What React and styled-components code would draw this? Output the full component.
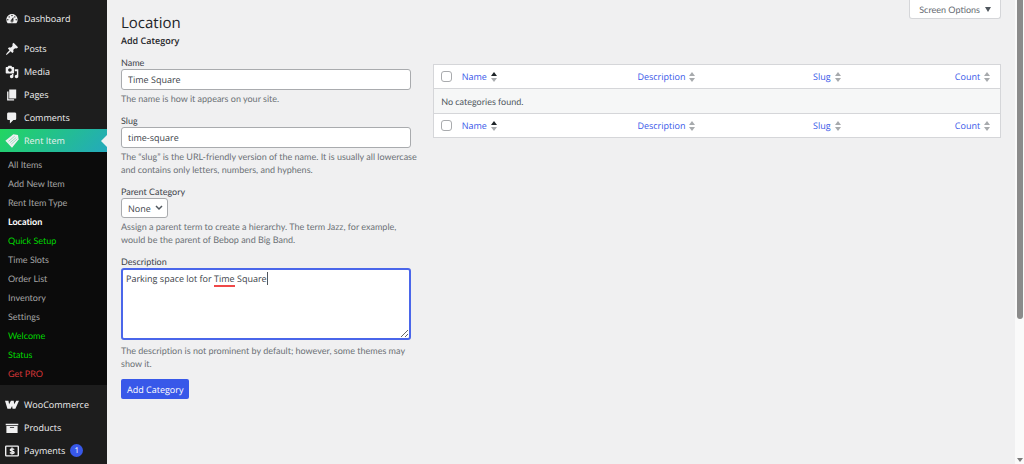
import { useState } from "react";
import styled, { createGlobalStyle } from "styled-components";

const menu = [
  { label: "Dashboard", icon: "dashboard", gap: true },
  { label: "Posts", icon: "posts" },
  { label: "Media", icon: "media" },
  { label: "Pages", icon: "pages" },
  { label: "Comments", icon: "comments" },
];

const submenu = [
  { label: "All Items" },
  { label: "Add New Item" },
  { label: "Rent Item Type" },
  { label: "Location", color: "#fff", current: true },
  { label: "Quick Setup", color: "#00d800" },
  { label: "Time Slots" },
  { label: "Order List" },
  { label: "Inventory" },
  { label: "Settings" },
  { label: "Welcome", color: "#00d800" },
  { label: "Status", color: "#00d800" },
  { label: "Get PRO", color: "#d63638" },
];

const shopMenu = [
  { label: "WooCommerce", icon: "woo" },
  { label: "Products", icon: "products" },
  { label: "Payments", icon: "payments", count: 1 },
];

const columns = ["Name", "Description", "Slug", "Count"];

const icons = {
  dashboard: (
    <path d="M3.76 16h12.48c1.1-1.37 1.76-3.11 1.76-5 0-4.42-3.58-8-8-8s-8 3.58-8 8c0 1.89.66 3.63 1.76 5zM10 4c.55 0 1 .45 1 1s-.45 1-1 1-1-.45-1-1 .45-1 1-1zM6 6c.55 0 1 .45 1 1s-.45 1-1 1-1-.45-1-1 .45-1 1-1zm8 0c.55 0 1 .45 1 1s-.45 1-1 1-1-.45-1-1 .45-1 1-1zm-5.37 5.55L12 7v6c0 1.1-.9 2-2 2s-2-.9-2-2c0-.57.24-1.08.63-1.45zM4 10c.55 0 1 .45 1 1s-.45 1-1 1-1-.45-1-1 .45-1 1-1zm12 0c.55 0 1 .45 1 1s-.45 1-1 1-1-.45-1-1 .45-1 1-1zm-5 3c0-.55-.45-1-1-1s-1 .45-1 1 .45 1 1 1 1-.45 1-1z" />
  ),
  posts: (
    <path d="M10.44 3.02l1.82-1.82 6.36 6.35-1.83 1.82c-1.05-.68-2.48-.57-3.41.36l-.75.75c-.92.93-1.04 2.35-.35 3.41l-1.83 1.82-2.41-2.41-2.8 2.79c-.42.42-3.38 2.71-3.8 2.29s1.86-3.39 2.28-3.81l2.79-2.79L4.1 9.36l1.83-1.82c1.05.69 2.48.57 3.4-.36l.75-.75c.93-.92 1.05-2.35.36-3.41z" />
  ),
  media: (
    <path d="M13 11V4c0-.55-.45-1-1-1h-1.67L9 1H5L3.67 3H2c-.55 0-1 .45-1 1v7c0 .55.45 1 1 1h10c.55 0 1-.45 1-1zM7 4.5c1.38 0 2.5 1.12 2.5 2.5S8.38 9.5 7 9.5 4.5 8.38 4.5 7 5.62 4.5 7 4.5zM14 6h5v10.5c0 1.38-1.12 2.5-2.5 2.5S14 17.88 14 16.5s1.12-2.5 2.5-2.5c.17 0 .34.02.5.05V9h-3V6zm-4 8.05V13h2v3.5c0 1.38-1.12 2.5-2.5 2.5S7 17.88 7 16.5 8.12 14 9.5 14c.17 0 .34.02.5.05z" />
  ),
  pages: <path d="M6 15V2h10v13H6zm-1 1h8v2H3V5h2v11z" />,
  comments: (
    <path d="M5 2h9c1.1 0 2 .9 2 2v7c0 1.1-.9 2-2 2h-2l-5 5v-5H5c-1.1 0-2-.9-2-2V4c0-1.1.9-2 2-2z" />
  ),
  rent: (
    <>
      <path d="M.5 9.500 12 .5l6.500 1 1 6.500L10 19.500z" />
      <path
        d="M5 10.500l9-7.500M7 12.500l9-7.500M9 14.500l8.500-7.500"
        stroke="#25c57c"
        strokeWidth=".6"
      />
    </>
  ),
  woo: (
    <path d="M0 4h5l.8 5L8.500 4h4l.6 5L16 4h4l-5.200 11.500h-4l-.7-4-2 4H3.500z" />
  ),
  products: <path d="M19 4v2H1V4h18zM2 7h16v10H2V7zm11 3V9H7v1h6z" />,
  payments: (
    <g fill="none" stroke="currentColor" strokeWidth="2">
      <rect x="1" y="3" width="18" height="14" rx="1" />
      <path d="M13 8C12 6.500 7.500 6.500 7.500 8.500S13 10 13 12 8.500 13.500 7 12M10 5v10" />
    </g>
  ),
};

const MenuIcon = ({ name }) => (
  <Icon viewBox="0 0 20 20" aria-hidden="true">
    {icons[name]}
  </Icon>
);

const MenuEntry = ({ item }) => (
  <MenuItem $gap={item.gap}>
    <MenuLink href="#">
      <MenuIcon name={item.icon} />
      {item.label}
      {item.count && <Count>{item.count}</Count>}
    </MenuLink>
  </MenuItem>
);

const ColumnRow = ({ id }) => (
  <tr>
    <CheckCell scope="col">
      <Checkbox type="checkbox" id={id} aria-label="Select All" />
    </CheckCell>
    {columns.map((column) => (
      <HeadCell key={column} scope="col">
        <SortLink href="#">
          {column}
          <Sorter viewBox="0 0 6 10" aria-hidden="true">
            <path d="M3 0 6 4H0z" fill={column === "Name" ? "#1d2327" : "#a7aaad"} />
            <path d="M3 10 0 6h6z" fill="#a7aaad" />
          </Sorter>
        </SortLink>
      </HeadCell>
    ))}
  </tr>
);

const App = () => {
  const [name, setName] = useState("Time Square");
  const [slug, setSlug] = useState("time-square");
  const [description, setDescription] = useState(
    "Parking space lot for Time Square"
  );

  return (
    <>
      <GlobalStyle />
      <Page>
        <Sidebar>
          <MenuList>
            {menu.map((item) => (
              <MenuEntry key={item.label} item={item} />
            ))}
            <MenuItem>
              <MenuLink href="#" $active>
                <MenuIcon name="rent" />
                Rent Item
              </MenuLink>
              <Submenu>
                {submenu.map((item) => (
                  <li key={item.label}>
                    <SubLink href="#" $color={item.color} $current={item.current}>
                      {item.label}
                    </SubLink>
                  </li>
                ))}
              </Submenu>
            </MenuItem>
            {shopMenu.map((item) => (
              <MenuEntry key={item.label} item={item} />
            ))}
          </MenuList>
        </Sidebar>

        <Main>
          <TopBar>
            <Title>Location</Title>
            <ScreenOptions type="button">
              Screen Options
              <Triangle />
            </ScreenOptions>
          </TopBar>
          <Columns>
            <form onSubmit={(e) => e.preventDefault()}>
              <Subtitle>Add Category</Subtitle>
              <Field>
                <Label htmlFor="name">Name</Label>
                <Input
                  id="name"
                  type="text"
                  value={name}
                  onChange={(e) => setName(e.target.value)}
                />
                <Help>The name is how it appears on your site.</Help>
              </Field>
              <Field>
                <Label htmlFor="slug">Slug</Label>
                <Input
                  id="slug"
                  type="text"
                  value={slug}
                  onChange={(e) => setSlug(e.target.value)}
                />
                <Help>
                  The “slug” is the URL-friendly version of the name. It is
                  usually all lowercase and contains only letters, numbers, and
                  hyphens.
                </Help>
              </Field>
              <Field>
                <Label htmlFor="parent">Parent Category</Label>
                <SelectBox>
                  <Select id="parent">
                    <option>None</option>
                  </Select>
                  <Chevron viewBox="0 0 10 10" aria-hidden="true">
                    <path d="M2 3l3 3 3-3" />
                  </Chevron>
                </SelectBox>
                <Help>
                  Assign a parent term to create a hierarchy. The term Jazz, for
                  example, would be the parent of Bebop and Big Band.
                </Help>
              </Field>
              <Field>
                <Label htmlFor="description">Description</Label>
                <Editor>
                  <TextArea
                    id="description"
                    spellCheck="false"
                    value={description}
                    onChange={(e) => setDescription(e.target.value)}
                  />
                  <SpellLayer aria-hidden="true">
                    {description.split(/(Time)/).map((part, i) =>
                      part === "Time" ? (
                        <Misspelled key={i}>{part}</Misspelled>
                      ) : (
                        part
                      )
                    )}
                    <Caret />
                  </SpellLayer>
                </Editor>
                <Help>
                  The description is not prominent by default; however, some
                  themes may show it.
                </Help>
              </Field>
              <SubmitButton type="submit">Add Category</SubmitButton>
            </form>

            <Table>
              <thead>
                <ColumnRow id="select-all-top" />
              </thead>
              <tbody>
                <tr>
                  <EmptyCell colSpan={5}>No categories found.</EmptyCell>
                </tr>
              </tbody>
              <tfoot>
                <ColumnRow id="select-all-bottom" />
              </tfoot>
            </Table>
          </Columns>
        </Main>

        <Scrollbar aria-hidden="true">
          <Thumb />
          <ScrollArrow />
        </Scrollbar>
      </Page>
    </>
  );
};

export default App;

const smallFont = `Lato, "Open Sans", sans-serif`;

const GlobalStyle = createGlobalStyle`
  * {
    box-sizing: border-box;
  }
  body {
    margin: 0;
    background: #f0f0f1;
    color: #50575e;
    font-family: "Open Sans", "Noto Sans", sans-serif;
    font-size: 9px;
    line-height: 13px;
    text-rendering: geometricPrecision;
    font-variant-ligatures: none;
  }
  input, select, textarea, button {
    font-family: inherit;
    text-rendering: inherit;
  }
`;

const Page = styled.div`
  display: flex;
  min-height: 100vh;
`;

const Sidebar = styled.nav`
  flex: 0 0 107px;
  background: #1d1d1d;
`;

const MenuList = styled.ul`
  list-style: none;
  margin: 0;
  padding: 7px 0 0;
`;

const MenuItem = styled.li`
  margin-bottom: ${({ $gap }) => ($gap ? "7px" : "0")};
`;

const MenuLink = styled.a`
  position: relative;
  display: flex;
  align-items: center;
  gap: 5px;
  height: 23px;
  padding-left: 5px;
  color: #f0f0f1;
  text-decoration: none;
  background: ${({ $active }) =>
    $active ? "linear-gradient(135deg, #22d660, #24a9bd)" : "none"};
  &::after {
    content: "";
    display: ${({ $active }) => ($active ? "block" : "none")};
    position: absolute;
    right: 0;
    border: 6px solid transparent;
    border-left: 0;
    border-right-color: #f0f0f1;
  }
`;

const Icon = styled.svg`
  flex: none;
  width: 14px;
  height: 14px;
  fill: currentColor;
`;

const Count = styled.span`
  display: grid;
  place-items: center;
  width: 13px;
  height: 13px;
  border-radius: 50%;
  background: #3858e9;
  color: #fff;
  font-size: 8px;
`;

const Submenu = styled.ul`
  list-style: none;
  margin: 0 0 8px;
  padding: 3px 0 2px;
  background: #0b0b0b;
  font-family: ${smallFont};
`;

const SubLink = styled.a`
  display: block;
  padding-left: 8px;
  line-height: 19px;
  text-decoration: none;
  color: ${({ $color }) => $color || "#a5a5a5"};
  font-weight: ${({ $current }) => ($current ? "700" : "400")};
`;

const Main = styled.main`
  flex: 1;
  min-width: 0;
  padding: 0 14px;
`;

const TopBar = styled.header`
  display: flex;
  justify-content: space-between;
  align-items: flex-start;
`;

const Title = styled.h1`
  margin: 0;
  padding-top: 13px;
  font-size: 15px;
  line-height: 21px;
  font-weight: 400;
  color: #1d2327;
`;

const ScreenOptions = styled.button`
  display: flex;
  align-items: center;
  gap: 5px;
  height: 19px;
  padding: 0 9px;
  border: 1px solid #d5d6d9;
  border-top: 0;
  border-radius: 0 0 3px 3px;
  background: #fff;
  color: #646970;
  font-family: ${smallFont};
  font-size: 9px;
`;

const Triangle = styled.span`
  border: 3px solid transparent;
  border-top: 5px solid #50575e;
  border-bottom: 0;
`;

const Columns = styled.div`
  display: grid;
  grid-template-columns: 34% minmax(0, 1fr);
  gap: 13px;
  align-items: start;
`;

const Subtitle = styled.h2`
  margin: 0 0 8px;
  font-size: 9px;
  line-height: 14px;
  font-weight: 600;
  color: #1d2327;
`;

const Field = styled.div`
  margin-bottom: 9px;
`;

const Label = styled.label`
  display: block;
  color: #3c434a;
  font-family: ${smallFont};
`;

const Input = styled.input`
  display: block;
  width: 97%;
  height: 21px;
  padding: 0 6px;
  border: 1px solid #a9abae;
  border-radius: 3px;
  background: #fff;
  color: #3c434a;
  font-size: 9px;
`;

const Help = styled.p`
  margin: 2px 0 0;
  color: #6c7076;
  font-family: ${smallFont};
`;

const SelectBox = styled.div`
  position: relative;
  width: fit-content;
`;

const Select = styled.select`
  display: block;
  appearance: none;
  height: 20px;
  padding: 0 16px 0 6px;
  border: 1px solid #a9abae;
  border-radius: 3px;
  background: #fff;
  color: #3c434a;
  font-size: 9px;
`;

const Chevron = styled.svg`
  position: absolute;
  top: 5px;
  right: 4px;
  width: 10px;
  height: 10px;
  fill: none;
  stroke: #50575e;
  stroke-width: 1.5;
  pointer-events: none;
`;

const Editor = styled.div`
  position: relative;
  width: 97%;
  margin-bottom: 4px;
`;

const TextArea = styled.textarea`
  display: block;
  width: 100%;
  height: 72px;
  padding: 2px 3px;
  border: 2px solid #4a66ea;
  border-radius: 3px;
  outline: none;
  background: #fff;
  color: #3c434a;
  font-size: 9px;
  line-height: 14px;
`;

const SpellLayer = styled.div`
  position: absolute;
  inset: 0;
  padding: 4px 5px;
  color: transparent;
  font-size: 9px;
  line-height: 14px;
  pointer-events: none;
`;

const Misspelled = styled.span`
  border-bottom: 2px solid #f04848;
`;

const Caret = styled.span`
  border-right: 1px solid #50575e;
`;

const SubmitButton = styled.button`
  height: 20px;
  padding: 0 6px;
  border: 0;
  border-radius: 2px;
  background: #3858e9;
  color: #fff;
  font-size: 9px;
`;

const Table = styled.table`
  width: 100%;
  margin-top: 30px;
  table-layout: fixed;
  border-collapse: collapse;
  border: 1px solid #d5d6d9;
  background: #fff;
`;

const CheckCell = styled.th`
  width: 23px;
  padding: 0 0 0 7px;
`;

const Checkbox = styled.input`
  display: block;
  appearance: none;
  width: 11px;
  height: 11px;
  margin: 0;
  border: 1px solid #a9abae;
  border-radius: 3px;
  background: #fff;
`;

const HeadCell = styled.th`
  height: 24px;
  padding: 0 5px;
  text-align: left;
  font-weight: 400;
  &:nth-child(2),
  &:nth-child(3) {
    width: 31%;
  }
  &:nth-child(4) {
    width: 25%;
  }
`;

const SortLink = styled.a`
  display: flex;
  align-items: center;
  gap: 4px;
  color: #3858e9;
  font-size: 9px;
  text-decoration: none;
`;

const Sorter = styled.svg`
  width: 6px;
  height: 10px;
`;

const EmptyCell = styled.td`
  height: 25px;
  padding: 0 7px;
  border: 1px solid #d5d6d9;
  background: #f6f7f7;
  color: #50575e;
  font-family: ${smallFont};
`;

const Scrollbar = styled.div`
  display: flex;
  flex-direction: column;
  justify-content: space-between;
  align-items: center;
  flex: 0 0 9px;
  padding-bottom: 2px;
  background: #fafafa;
`;

const Thumb = styled.div`
  width: 6px;
  height: 69%;
  border-radius: 0 0 3px 3px;
  background: #8b8b8b;
`;

const ScrollArrow = styled.div`
  border: 3px solid transparent;
  border-top: 4px solid #7a7a7a;
  border-bottom: 0;
`;
